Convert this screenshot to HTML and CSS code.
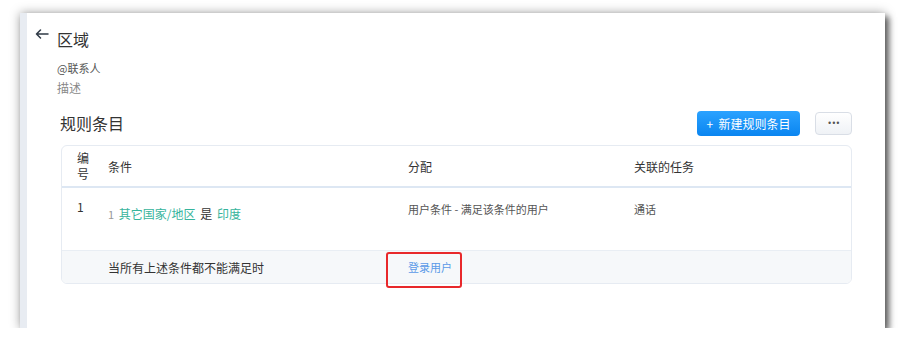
FILE: index.html
```html
<!doctype html>
<html lang="zh">
<head>
<meta charset="utf-8">
<title>区域</title>
<link rel="stylesheet" href="styles.css">
</head>
<body>
<div class="page">
  <div class="window">
    <div class="rail"></div>
    <div class="main">
      <div class="head">
        <svg class="back" width="14" height="10" viewBox="0 0 14 10">
          <path d="M13 5H1.5M5.5 1L1.5 5l4 4" fill="none" stroke="#2f3a46" stroke-width="1.5" stroke-linecap="round" stroke-linejoin="round"/>
        </svg>
        <span class="title">区域</span>
      </div>
      <div class="meta">
        <div class="owner">@联系人</div>
        <div class="desc">描述</div>
      </div>

      <div class="section">
        <div class="sectionHead">
          <span class="sectionTitle">规则条目</span>
          <div class="actions">
            <span class="btnPrimary">+&nbsp; 新建规则条目</span>
            <span class="btnMore">•••</span>
          </div>
        </div>

        <div class="card">
          <div class="row rowHead">
            <div class="cell num">编<br>号</div>
            <div class="cell">条件</div>
            <div class="cell">分配</div>
            <div class="cell">关联的任务</div>
          </div>
          <div class="row rowBody">
            <div class="cell num">1</div>
            <div class="cell cond">
              <span class="idx">1</span>
              <span class="tag">其它国家/地区</span>
              <span class="op">是</span>
              <span class="tag">印度</span>
            </div>
            <div class="cell small">用户条件 - 满足该条件的用户</div>
            <div class="cell small">通话</div>
          </div>
          <div class="row rowFoot">
            <div class="cell num"></div>
            <div class="cell">当所有上述条件都不能满足时</div>
            <div class="cell assign">
              <span class="link">登录用户</span>
              <span class="mark"></span>
            </div>
            <div class="cell"></div>
          </div>
        </div>
      </div>
    </div>
  </div>
</div>
</body>
</html>
```

FILE: styles.css
```css
html, body {
  margin: 0;
  padding: 0;
  background: white;
  font-family: "Noto Sans CJK SC", "Noto Sans", sans-serif;
  color: #333;
}

* {
  box-sizing: border-box;
}

.page {
  padding: 13px 20px 0 20px;
}

.window {
  width: 865px;
  height: 315px;
  display: flex;
  background: white;
  box-shadow: 4px 4px 6px rgba(0, 0, 0, 0.55), 0 0 10px rgba(0, 0, 0, 0.35);
}

.rail {
  width: 7px;
  background: #e8ecf2;
}

.main {
  flex: 1;
  padding: 14px 33px 0 8px;
}

.head {
  display: flex;
  align-items: center;
  height: 24px;
}

.back {
  margin-top: -10px;
}

.title {
  margin-left: 8px;
  font-size: 16px;
  line-height: 24px;
  color: #333;
}

.meta {
  padding-left: 22px;
  margin-top: 9px;
}

.owner {
  font-size: 11px;
  line-height: 16px;
  color: #555;
}

.desc {
  margin-top: 4px;
  font-size: 12px;
  line-height: 16px;
  color: #888;
}

.section {
  margin-left: 25px;
  margin-top: 14px;
}

.sectionHead {
  display: flex;
  justify-content: space-between;
  align-items: center;
  height: 26px;
}

.sectionTitle {
  font-size: 16px;
  color: #333;
}

.actions {
  display: flex;
  align-items: center;
  gap: 15px;
}

.btnPrimary {
  width: 103px;
  height: 25px;
  display: flex;
  align-items: center;
  justify-content: center;
  border-radius: 4px;
  background: linear-gradient(#2ba2ff, #0a85f0);
  color: white;
  font-size: 12px;
}

.btnMore {
  width: 37px;
  height: 23px;
  display: flex;
  align-items: center;
  justify-content: center;
  border: 1px solid #d9dee6;
  border-radius: 4px;
  background: linear-gradient(#ffffff, #eff2f6);
  color: #555;
  font-family: "DejaVu Sans", sans-serif;
  font-size: 8px;
  letter-spacing: -0.5px;
}

.card {
  margin-top: 9px;
  margin-left: 1px;
  border: 1px solid #e6ebf2;
  border-radius: 6px;
}

.row {
  display: grid;
  grid-template-columns: 46px 300px 226px 1fr;
}

.cell {
  font-size: 12px;
  color: #333;
}

.num {
  padding-left: 15px;
}

.rowHead {
  height: 42px;
  align-items: center;
  border-bottom: 2px solid #dde7f3;
}

.rowHead .num {
  line-height: 16px;
}

.rowBody {
  height: 62px;
  padding-top: 10px;
}

.rowBody .cell {
  line-height: 18px;
}

.cond {
  padding-top: 7px;
}

.idx {
  color: #999;
  font-size: 11px;
  margin-right: 2px;
}

.tag {
  color: #36b49c;
}

.op {
  margin: 0 2px;
}

.small {
  font-size: 11px;
  color: #555;
  padding-top: 2px;
}

.rowFoot {
  height: 33px;
  align-items: center;
  background: #f6f8fa;
  border-top: 1px solid #e9eef4;
  border-radius: 0 0 5px 5px;
}

.assign {
  position: relative;
  align-self: stretch;
  display: flex;
  align-items: center;
}

.link {
  font-size: 11px;
  color: #5a9ae8;
}

.mark {
  position: absolute;
  left: -22px;
  top: 1px;
  width: 76px;
  height: 36px;
  border: 2px solid #e8282b;
  border-radius: 3px;
}
```
